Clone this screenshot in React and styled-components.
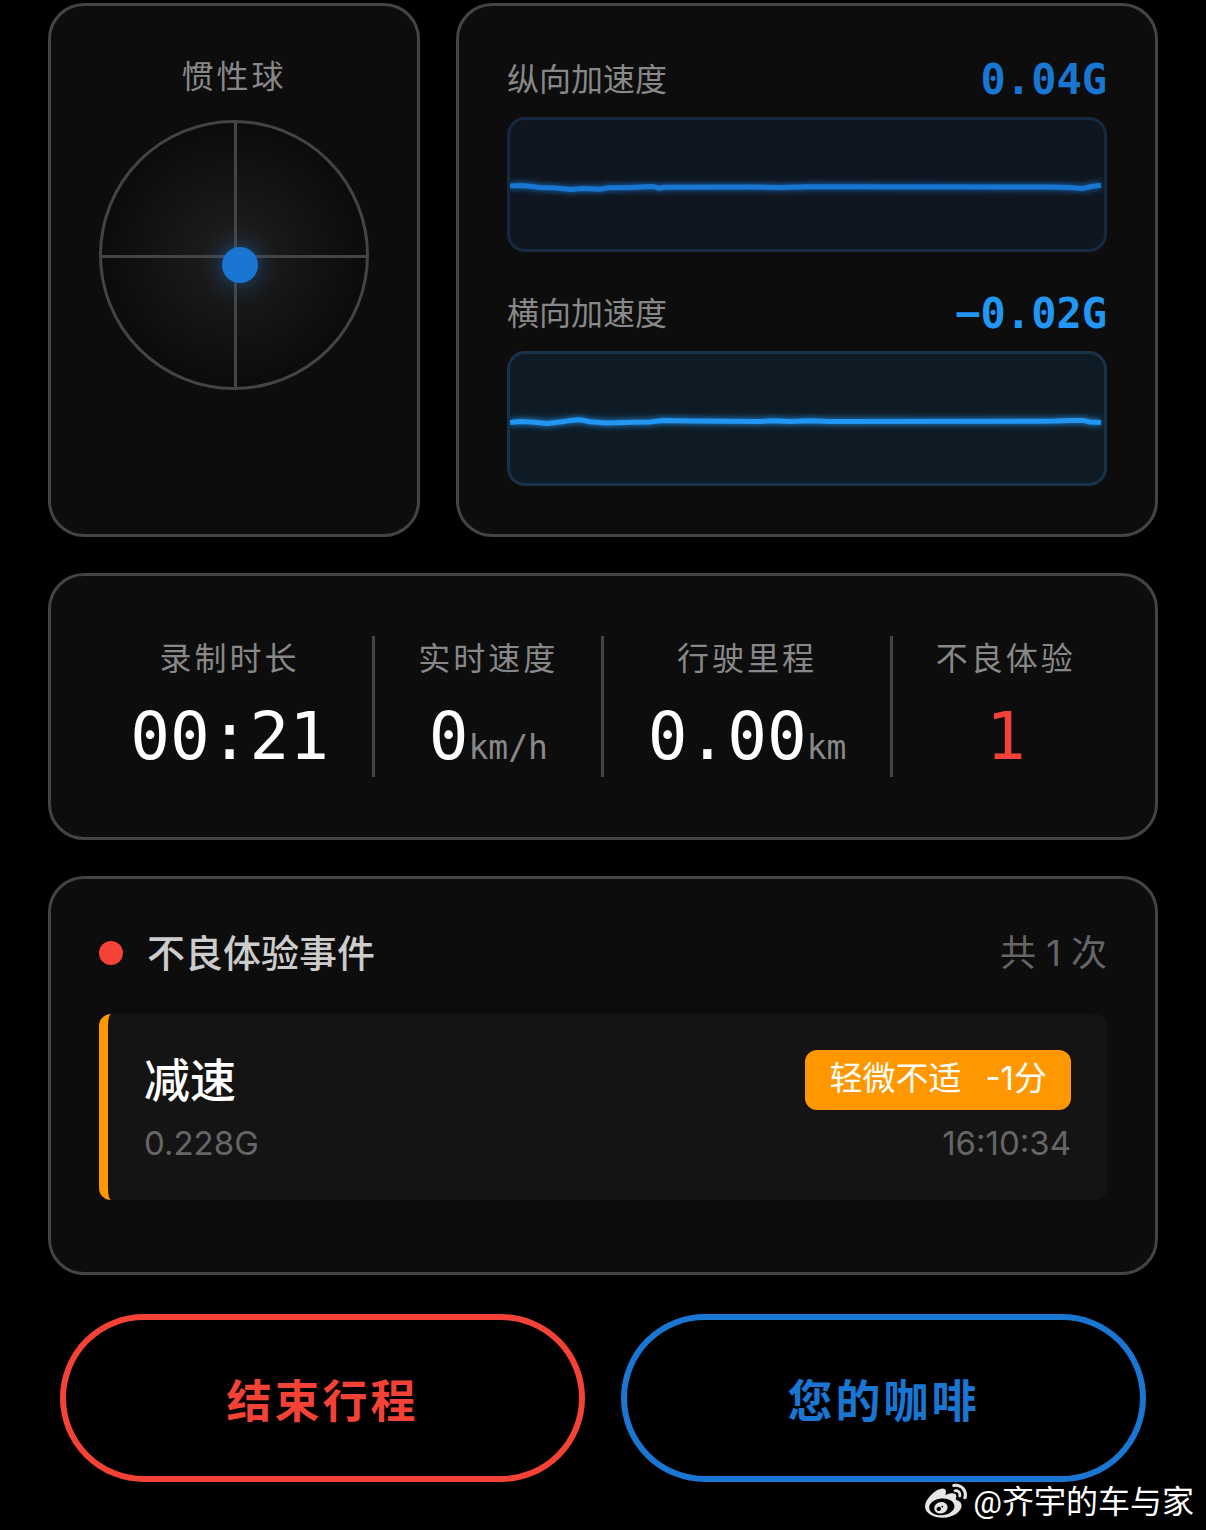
import styled, { createGlobalStyle } from 'styled-components';
import { FaWeibo } from 'react-icons/fa';

const charts = [
  {
    label: '纵向加速度',
    value: '0.04G',
    color: '#1976d2',
    fill: '#0f1620',
    border: '#16293f',
    points:
      '0,66 10,65.6 20,66.2 30,67.4 46,68 61,69.4 73,68.6 90,69.2 98,67.8 120,67.4 143,66.6 149,68.2 154,67.2 240,67 270,67.4 300,66.8 540,67 560,67.4 573,68.4 580,66.8 591,65.2',
  },
  {
    label: '横向加速度',
    value: '−0.02G',
    color: '#2196f3',
    fill: '#0f1b24',
    border: '#19324a',
    points:
      '0,68.6 10,67.6 22,68 37,69.4 52,67.8 60,66.6 70,65.8 80,67.8 97,69 123,68.2 140,68 153,66.4 180,67 250,67.4 263,66.8 280,67.4 300,66.8 320,67.4 523,67.2 545,67 560,66.4 573,66.4 580,68 591,68.4',
  },
];

const stats = [
  { label: '录制时长', value: '00:21' },
  { label: '实时速度', value: '0', unit: 'km/h' },
  { label: '行驶里程', value: '0.00', unit: 'km' },
  { label: '不良体验', value: '1', color: '#f44336' },
];

const events = [
  {
    name: '减速',
    level: '轻微不适',
    score: '-1分',
    force: '0.228G',
    time: '16:10:34',
  },
];

const InertiaBall = () => (
  <Ball viewBox='0 0 270 270'>
    <defs>
      <radialGradient id='ball'>
        <stop offset='0' stopColor='#1f1f1f' />
        <stop offset='1' stopColor='#0b0b0b' />
      </radialGradient>
      <radialGradient id='glow'>
        <stop offset='0.4' stopColor='#1976d2' stopOpacity='0.25' />
        <stop offset='0.65' stopColor='#1976d2' stopOpacity='0.08' />
        <stop offset='1' stopColor='#1976d2' stopOpacity='0' />
      </radialGradient>
    </defs>
    <circle cx='135' cy='135' r='133.5' fill='url(#ball)' stroke='#444' strokeWidth='3' />
    <path d='M3 136.5H267M136.5 3V267' stroke='#444' strokeWidth='3' />
    <circle cx='141' cy='145' r='40' fill='url(#glow)' />
    <circle cx='141' cy='145' r='18' fill='#1976d2' />
  </Ball>
);

const Chart = ({ chart }) => (
  <div>
    <ChartHead>
      <ChartLabel>{chart.label}</ChartLabel>
      <ChartValue $color={chart.color}>{chart.value}</ChartValue>
    </ChartHead>
    <ChartBox $fill={chart.fill} $border={chart.border}>
      <Wave viewBox='0 0 594 129' preserveAspectRatio='none' $color={chart.color}>
        <polyline
          points={chart.points}
          fill='none'
          stroke={chart.color}
          strokeWidth='5'
          strokeLinejoin='round'
        />
      </Wave>
    </ChartBox>
  </div>
);

const App = () => {
  return (
    <Page>
      <GlobalStyle />

      <TopRow>
        <BallCard>
          <BallTitle>惯性球</BallTitle>
          <InertiaBall />
        </BallCard>
        <ChartCard>
          {charts.map((chart) => (
            <Chart key={chart.label} chart={chart} />
          ))}
        </ChartCard>
      </TopRow>

      <StatsCard>
        {stats.map((stat) => (
          <Stat key={stat.label}>
            <StatLabel>{stat.label}</StatLabel>
            <StatValue $color={stat.color}>
              {stat.value}
              {stat.unit && <Unit>{stat.unit}</Unit>}
            </StatValue>
          </Stat>
        ))}
      </StatsCard>

      <EventsCard>
        <EventsHead>
          <Dot />
          <EventsTitle>不良体验事件</EventsTitle>
          <Count>共 {events.length} 次</Count>
        </EventsHead>
        <List>
          {events.map((event) => (
            <Event key={event.time}>
              <EventRow>
                <EventName>{event.name}</EventName>
                <Tag>
                  <span>{event.level}</span>
                  <span>{event.score}</span>
                </Tag>
              </EventRow>
              <EventMeta>
                <span>{event.force}</span>
                <span>{event.time}</span>
              </EventMeta>
            </Event>
          ))}
        </List>
      </EventsCard>

      <Actions>
        <Button type='button' $color='#f44336'>
          结束行程
        </Button>
        <Button type='button' $color='#1976d2'>
          您的咖啡
        </Button>
      </Actions>

      <Credit>
        <FaWeibo size={42} color='#e6e6e6' />
        <span>@齐宇的车与家</span>
      </Credit>
    </Page>
  );
};

export default App;

const GlobalStyle = createGlobalStyle`
  * {
    box-sizing: border-box;
  }

  body {
    margin: 0;
    background: #000;
    color: #fff;
    font-family: Inter, 'Noto Sans CJK SC', sans-serif;
    line-height: 1;
  }

  h2, p, ul {
    margin: 0;
    padding: 0;
    font-weight: 400;
  }
`;

const Page = styled.main`
  padding: 3px 48px 0;
`;

const Card = styled.section`
  background: #0d0d0d;
  border: 3px solid #444;
  border-radius: 36px;
  padding: 48px;
`;

const TopRow = styled.div`
  display: flex;
  gap: 36px;
`;

const BallCard = styled(Card)`
  flex: none;
`;

const BallTitle = styled.h2`
  margin-bottom: 20px;
  font-size: 32px;
  line-height: 46px;
  letter-spacing: 3px;
  text-align: center;
  color: #888;
`;

const Ball = styled.svg`
  display: block;
  width: 270px;
  height: 270px;
`;

const ChartCard = styled(Card)`
  flex: 1;
  display: flex;
  flex-direction: column;
  gap: 36px;
`;

const ChartHead = styled.div`
  display: flex;
  align-items: center;
  justify-content: space-between;
  height: 51px;
  margin-bottom: 12px;
`;

const ChartLabel = styled.span`
  font-size: 32px;
  color: #888;
`;

const ChartValue = styled.span`
  font-family: 'DejaVu Sans Mono', monospace;
  font-size: 42px;
  font-weight: 700;
  color: ${({ $color }) => $color};
`;

const ChartBox = styled.div`
  height: 135px;
  overflow: hidden;
  background: ${({ $fill }) => $fill};
  border: 3px solid ${({ $border }) => $border};
  border-radius: 18px;
`;

const Wave = styled.svg`
  display: block;
  width: 100%;
  height: 100%;
  filter: drop-shadow(0 0 3px ${({ $color }) => $color});
`;

const StatsCard = styled(Card)`
  display: flex;
  justify-content: space-between;
  margin-top: 36px;
  padding: 60px 36px;
`;

const Stat = styled.div`
  flex: 1 1 auto;
  text-align: center;

  & + & {
    border-left: 3px solid #444;
  }
`;

const StatLabel = styled.p`
  margin-bottom: 14px;
  font-size: 32px;
  line-height: 46px;
  letter-spacing: 3px;
  color: #888;
`;

const StatValue = styled.p`
  font-family: 'DejaVu Sans Mono', monospace;
  font-size: 66px;
  line-height: 81px;
  white-space: nowrap;
  color: ${({ $color }) => $color || '#fff'};
`;

const Unit = styled.span`
  font-size: 33px;
  line-height: 1;
  color: #888;
`;

const EventsCard = styled(Card)`
  margin-top: 36px;
`;

const EventsHead = styled.div`
  display: flex;
  align-items: center;
  gap: 24px;
  height: 51px;
  margin-bottom: 36px;
`;

const Dot = styled.span`
  width: 24px;
  height: 24px;
  border-radius: 50%;
  background: #f44336;
`;

const EventsTitle = styled.h2`
  font-size: 38px;
  font-weight: 500;
  color: #ccc;
`;

const Count = styled.span`
  margin-left: auto;
  font-size: 36px;
  color: #666;
`;

const List = styled.ul`
  list-style: none;
`;

const Event = styled.li`
  margin-bottom: 24px;
  padding: 36px;
  background: #141414;
  border-left: 9px solid #ff9800;
  border-radius: 12px;
`;

const EventRow = styled.div`
  display: flex;
  align-items: center;
  justify-content: space-between;
  height: 60px;
  margin-bottom: 12px;
`;

const EventName = styled.span`
  font-size: 46px;
  font-weight: 500;
`;

const Tag = styled.span`
  display: flex;
  gap: 24px;
  padding: 0 24px 3px;
  font-size: 33px;
  line-height: 57px;
  background: #ff9800;
  border-radius: 12px;
`;

const EventMeta = styled.div`
  display: flex;
  justify-content: space-between;
  font-size: 33px;
  line-height: 42px;
  color: #666;
`;

const Actions = styled.div`
  display: flex;
  gap: 36px;
  margin-top: 39px;
  padding: 0 12px;
`;

const Button = styled.button`
  flex: 1;
  height: 168px;
  background: transparent;
  border: 6px solid ${({ $color }) => $color};
  border-radius: 84px;
  font-family: inherit;
  font-size: 45px;
  font-weight: 600;
  letter-spacing: 3px;
  color: ${({ $color }) => $color};
  cursor: pointer;
`;

const Credit = styled.footer`
  display: flex;
  align-items: center;
  justify-content: flex-end;
  gap: 6px;
  height: 40px;
  margin-right: -36px;
  font-family: Roboto, 'Noto Sans CJK SC', sans-serif;
  font-size: 32px;
`;
